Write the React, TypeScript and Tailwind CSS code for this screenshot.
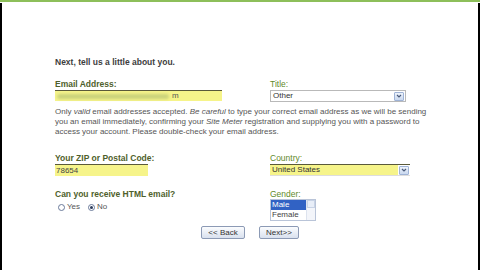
import React from "react";

const font = { fontFamily: '"Liberation Sans", Arial, sans-serif' };

function Label({ children, bold }: { children: React.ReactNode; bold?: boolean }) {
  return (
    <div
      className={
        bold
          ? "text-[8.5px] leading-[10px] font-bold text-[#4f5f2c]"
          : "text-[8.5px] leading-[10px] text-[#5f8a2a]"
      }
    >
      {children}
    </div>
  );
}

function DropArrow() {
  return (
    <div className="w-[10px] h-[9px] mr-[1px] rounded-[1px] border border-[#9fb3d6] bg-gradient-to-b from-[#eef3fb] to-[#c9d8ef] flex items-center justify-center">
      <svg width="6" height="4" viewBox="0 0 6 4">
        <path d="M1 1 L3 3 L5 1" fill="none" stroke="#4a5a7a" strokeWidth="1.2" />
      </svg>
    </div>
  );
}

export default function App() {
  return (
    <div className="w-[480px] h-[270px] bg-white overflow-hidden flex flex-col" style={font}>
      <div className="h-[2px] bg-[#8dbf5a]" />
      <div className="flex-1 mt-[1px] border-l-2 border-r-2 border-black bg-white pl-[53px] pt-[53px]">
        <div className="text-[8.5px] leading-[12px] font-bold text-[#3d3d3d]">
          Next, tell us a little about you.
        </div>

        <div className="flex mt-[11px]">
          <div className="w-[215px]">
            <Label bold>Email Address:</Label>
            <div className="w-[167px] h-[11px] mt-[1px] border-t border-[#5a5a3a] bg-[#f6f48a] flex items-center pl-[2px]">
              <div className="w-[112px] h-[5px] rounded-full bg-[#c9d27a] blur-[1.5px]" />
              <span className="ml-[3px] text-[8px] text-[#555]">m</span>
            </div>
          </div>
          <div>
            <Label>Title:</Label>
            <div className="w-[136px] h-[12px] mt-[1px] border border-[#b9b9b9] bg-white flex items-center justify-between">
              <span className="pl-[2px] text-[8px] leading-[10px] text-[#333]">Other</span>
              <DropArrow />
            </div>
          </div>
        </div>

        <p className="mt-[5px] w-[380px] text-[8px] leading-[10px] text-[#555]">
          Only <i className="leading-[10px]">valid</i> email addresses accepted.{" "}
          <i className="leading-[10px]">Be careful</i> to type your correct email address as we will be sending
          you an email immediately, confirming your <i className="leading-[10px]">Site Meter</i> registration and
          supplying you with a password to access your account. Please double-check your email address.
        </p>

        <div className="flex mt-[16px]">
          <div className="w-[215px]">
            <Label bold>Your ZIP or Postal Code:</Label>
            <div className="w-[93px] h-[12px] mt-[1px] border-t border-[#5a5a3a] bg-[#f6f48a] flex items-center pl-[1px]">
              <span className="text-[8px] leading-[10px] text-[#444]">78654</span>
            </div>
          </div>
          <div>
            <Label>Country:</Label>
            <div className="w-[140px] h-[12px] mt-[1px] border-t border-[#5a5a3a] border-b border-b-[#ddd] bg-[#f6f48a] flex items-center justify-between">
              <span className="pl-[2px] text-[8px] leading-[10px] text-[#333]">United States</span>
              <div className="h-full bg-white flex items-center pl-[1px]">
                <DropArrow />
              </div>
            </div>
          </div>
        </div>

        <div className="flex mt-[13px]">
          <div className="w-[215px]">
            <Label bold>Can you receive HTML email?</Label>
            <div className="flex items-center mt-[3px] pl-[3px] text-[8px] leading-[10px] text-[#555]">
              <span className="w-[7px] h-[7px] rounded-full border border-[#6a7a9a] bg-white mr-[2px]" />
              <span>Yes</span>
              <span className="ml-[8px] w-[7px] h-[7px] rounded-full border border-[#6a7a9a] bg-white mr-[2px] flex items-center justify-center">
                <span className="w-[3px] h-[3px] rounded-full bg-[#2a3a5a]" />
              </span>
              <span>No</span>
            </div>
          </div>
          <div>
            <Label>Gender:</Label>
            <div className="w-[46px] h-[22px] border border-[#b9c4d8] bg-white flex">
              <div className="flex-1 flex flex-col text-[8px] leading-[10px]">
                <span className="bg-[#3162c4] text-white pl-[1px]">Male</span>
                <span className="text-[#444] pl-[1px]">Female</span>
              </div>
              <div className="w-[9px] border-l border-[#dde3ee] bg-[#f3f5fa] flex flex-col">
                <div className="h-[8px] border border-[#c8d3e6] bg-[#e8eef8]" />
              </div>
            </div>
          </div>
        </div>

        <div className="flex gap-[14px] mt-[5px] pl-[146px]">
          <button className="w-[44px] h-[13px] rounded-[2px] border border-[#8c9ab5] bg-gradient-to-b from-[#fbfcfe] to-[#d9e1ee] text-[8px] leading-[10px] text-[#333]">
            &lt;&lt; Back
          </button>
          <button className="w-[40px] h-[13px] rounded-[2px] border border-[#8c9ab5] bg-gradient-to-b from-[#fbfcfe] to-[#d9e1ee] text-[8px] leading-[10px] text-[#333]">
            Next&gt;&gt;
          </button>
        </div>
      </div>
    </div>
  );
}
